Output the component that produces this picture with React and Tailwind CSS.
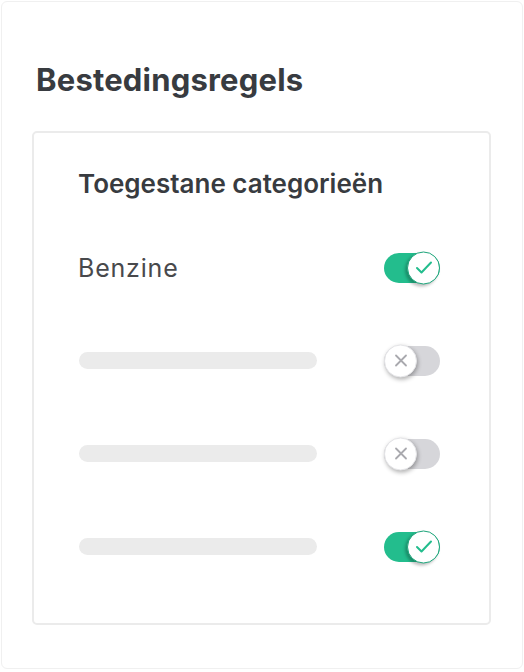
import React from 'react';

const Toggle = ({ on }) => {
  if (on) {
    return (
      <div className="relative w-[56px] h-[30px] rounded-full bg-[#23bd8d]">
        <div className="absolute right-0 top-1/2 -translate-y-1/2 w-[33px] h-[33px] rounded-full bg-white border border-[#1ea57b] shadow-[-2px_2px_3px_rgba(0,0,0,0.25)] flex items-center justify-center">
          <svg width="18" height="14" viewBox="0 0 18 14" fill="none">
            <path d="M2 7.5l4.5 4.5L16 2" stroke="#23bd8d" strokeWidth="2" strokeLinecap="round" strokeLinejoin="round" />
          </svg>
        </div>
      </div>
    );
  }
  return (
    <div className="relative w-[56px] h-[30px] rounded-full bg-[#d6d6da]">
      <div className="absolute left-0 top-1/2 -translate-y-1/2 w-[33px] h-[33px] rounded-full bg-white border border-[#e4e4e7] shadow-[1px_2px_4px_rgba(0,0,0,0.3)] flex items-center justify-center">
        <svg width="16" height="16" viewBox="0 0 16 16" fill="none">
          <path d="M3 3l10 10M13 3L3 13" stroke="#a9a9ae" strokeWidth="1.8" strokeLinecap="round" />
        </svg>
      </div>
    </div>
  );
};

const Row = ({ label, on }) => (
  <div className="flex items-center justify-between h-[93px] pr-[5px]">
    {label ? (
      <span className="text-[25px] leading-[30px] tracking-[0.8px] text-[#48494c]">{label}</span>
    ) : (
      <div className="w-[238px] h-[17px] ml-[1px] rounded-full bg-[#ebebeb]" />
    )}
    <Toggle on={on} />
  </div>
);

export default function App() {
  return (
    <div className="w-[524px] h-[672px] bg-white p-[1px] font-['Inter',sans-serif]">
      <div className="h-[668px] rounded-[6px] border border-[#f0f0f0] px-[30px] pt-[59px]">
        <h1 className="text-[31px] leading-[37px] font-bold text-[#383b40] pl-[4px] tracking-[0.2px]">Bestedingsregels</h1>
        <div className="mt-[33px] w-[459px] h-[494px] rounded-[5px] border-2 border-[#ebebeb] pl-[44px] pr-[44px] pt-[35px]">
          <h2 className="text-[26px] leading-[32px] font-semibold text-[#383b40]">Toegestane categorieën</h2>
          <div className="mt-[21px]">
            <Row label="Benzine" on />
            <Row on={false} />
            <Row on={false} />
            <Row on />
          </div>
        </div>
      </div>
    </div>
  );
}
